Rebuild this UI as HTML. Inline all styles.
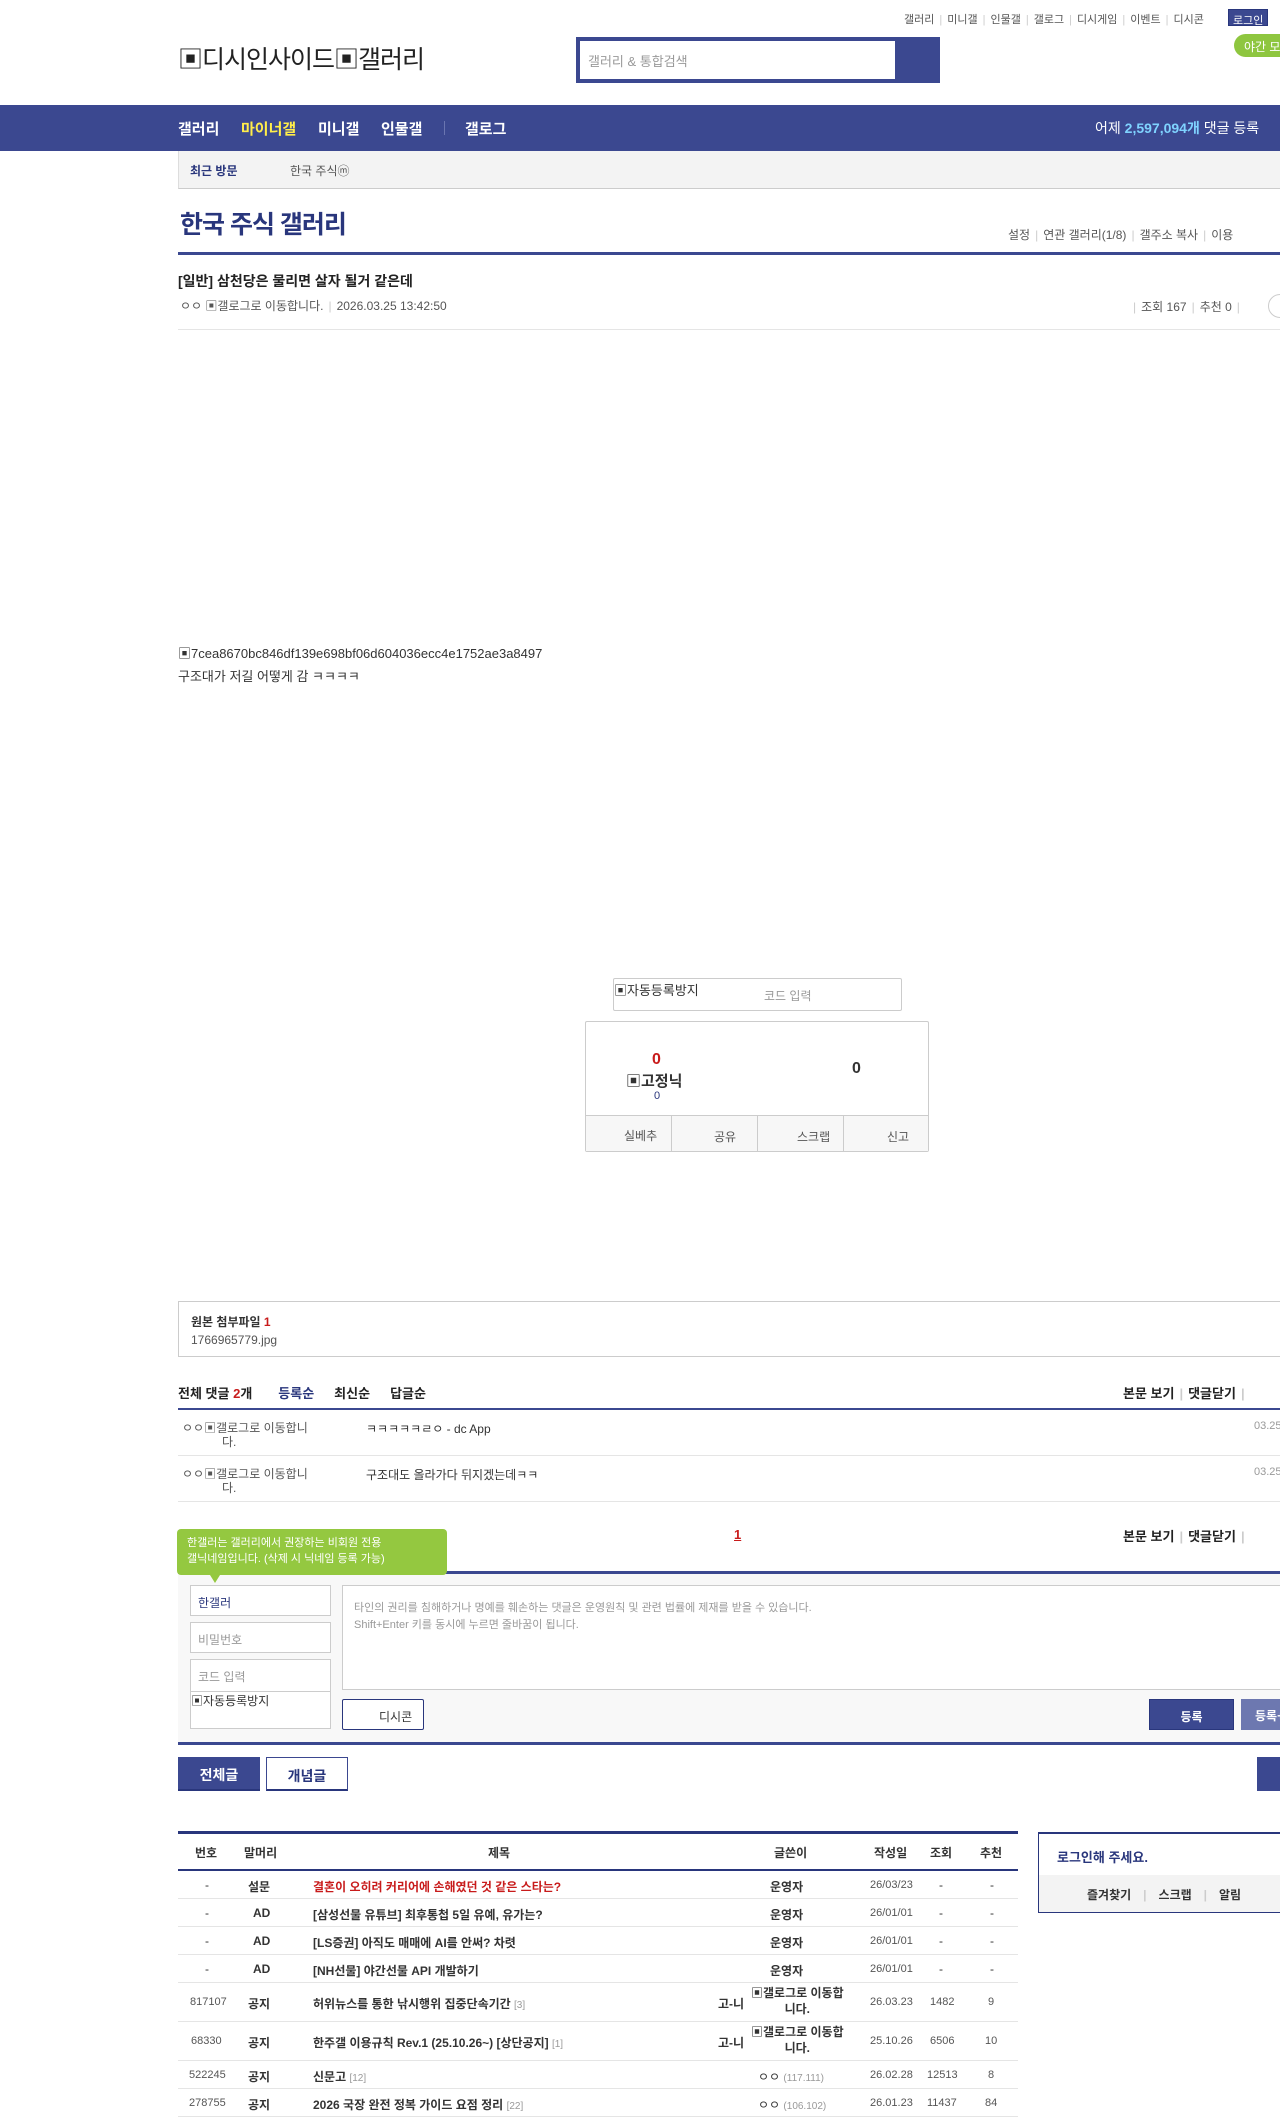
<!DOCTYPE html>
<html><head><meta charset="utf-8"><style>
*{margin:0;padding:0;box-sizing:border-box}
body{width:1280px;height:2119px;position:relative;overflow:hidden;background:#fff;font-family:"Liberation Sans","Noto Sans CJK KR",sans-serif;font-size:12px;color:#333}
.a{position:absolute;white-space:nowrap}
.nv{color:#29367c}
.b{font-weight:bold}
.sep{color:#ccc;margin:0 5px}
.line{position:absolute;height:1px;background:#e5e5e5}
.row{position:absolute;left:178px;width:840px;height:28px;border-bottom:1px solid #e5e5e5;font-size:12px}
.row span{position:absolute;top:7px}
.row span.s{font-size:11px;color:#555;top:8px}
</style></head><body>
<div class="a" style="left:904px;top:11px;font-size:11px;color:#555">갤러리<span class="sep">|</span>미니갤<span class="sep">|</span>인물갤<span class="sep">|</span>갤로그<span class="sep">|</span>디시게임<span class="sep">|</span>이벤트<span class="sep">|</span>디시콘</div>
<div class="a" style="left:1228px;top:9px;width:40px;height:17px;background:#3b4890;color:#fff;font-size:11px;padding:2px 4px;border:1px solid #29367c">로그인</div>
<div class="a" style="left:1234px;top:34px;width:60px;height:23px;background:#8ec63f;border-radius:12px;color:#fff;font-size:12px;padding:4px 10px">야간 모드</div>
<div class="a" style="left:178px;top:40px;font-size:25px;color:#222;letter-spacing:-1px">▣디시인사이드▣갤러리</div>
<div class="a" style="left:576px;top:37px;width:364px;height:46px;background:#3b4890"></div>
<div class="a" style="left:580px;top:41px;width:315px;height:38px;background:#fff;color:#999;font-size:13px;padding:10px 8px">갤러리 &amp; 통합검색</div>
<div class="a" style="left:0;top:105px;width:1280px;height:46px;background:#3b4890"></div>
<div class="a b" style="left:178px;top:118px;font-size:15px;color:#fff">갤러리</div>
<div class="a b" style="left:241px;top:118px;font-size:15px;color:#ffed4a">마이너갤</div>
<div class="a b" style="left:318px;top:118px;font-size:15px;color:#fff">미니갤</div>
<div class="a b" style="left:381px;top:118px;font-size:15px;color:#fff">인물갤</div>
<div class="a" style="left:444px;top:121px;width:1px;height:14px;background:#6a75b0"></div>
<div class="a b" style="left:465px;top:118px;font-size:15px;color:#fff">갤로그</div>
<div class="a" style="left:1095px;top:118px;font-size:14px;color:#fff">어제 <b style="color:#7fd3ff">2,597,094개</b> 댓글 등록</div>
<div class="a" style="left:178px;top:151px;width:1102px;height:38px;background:#f3f3f3;border-bottom:1px solid #ccc;border-left:1px solid #ddd"></div>
<div class="a b nv" style="left:190px;top:162px;font-size:12px">최근 방문</div>
<div class="a" style="left:290px;top:162px;font-size:12px;color:#555">한국 주식ⓜ</div>
<div class="a nv" style="left:180px;top:205px;font-size:25px;font-weight:bold;letter-spacing:-1px">한국 주식 갤러리</div>
<div class="a" style="left:1008px;top:226px;font-size:12px;color:#555">설정<span class="sep">|</span>연관 갤러리(1/8)<span class="sep">|</span>갤주소 복사<span class="sep">|</span>이용</div>
<div class="a" style="left:178px;top:252px;width:1102px;height:3px;background:#3b4890"></div>
<div class="a b" style="left:178px;top:271px;font-size:14px;color:#222">[일반] 삼천당은 물리면 살자 될거 같은데</div>
<div class="a" style="left:180px;top:297px;font-size:12px;color:#555">ㅇㅇ ▣갤로그로 이동합니다.<span class="sep">|</span>2026.03.25 13:42:50</div>
<div class="a" style="left:1128px;top:298px;font-size:12px;color:#555"><span class="sep">|</span>조회 167<span class="sep">|</span>추천 0<span class="sep">|</span></div>
<div class="a" style="left:1268px;top:294px;width:30px;height:24px;border:1px solid #ccc;border-radius:12px"></div>
<div class="line" style="left:178px;top:329px;width:1102px"></div>
<div class="a" style="left:178px;top:643px;font-size:13px;color:#333">▣7cea8670bc846df139e698bf06d604036ecc4e1752ae3a8497</div>
<div class="a" style="left:178px;top:666px;font-size:13px;color:#333">구조대가 저길 어떻게 감 ㅋㅋㅋㅋ</div>
<div class="a" style="left:613px;top:978px;width:289px;height:33px;border:1px solid #ccc;border-radius:2px"></div>
<div class="a" style="left:614px;top:980px;font-size:13px">▣자동등록방지</div>
<div class="a" style="left:764px;top:987px;font-size:12px;color:#999">코드 입력</div>
<div class="a" style="left:585px;top:1021px;width:344px;height:131px;border:1px solid #ccc;border-radius:2px"></div>
<div class="a b" style="left:652px;top:1051px;font-size:16px;color:#c81b1b">0</div>
<div class="a b" style="left:626px;top:1070px;font-size:15px;color:#333">▣고정닉</div>
<div class="a" style="left:654px;top:1090px;font-size:11px;color:#29367c">0</div>
<div class="a b" style="left:852px;top:1060px;font-size:16px;color:#333">0</div>
<div class="a" style="left:586px;top:1115px;width:342px;height:36px;background:#f7f7f7;border-top:1px solid #ccc"></div>
<div class="a" style="left:671px;top:1116px;width:1px;height:36px;background:#ccc"></div>
<div class="a" style="left:757px;top:1116px;width:1px;height:36px;background:#ccc"></div>
<div class="a" style="left:843px;top:1116px;width:1px;height:36px;background:#ccc"></div>
<div class="a" style="left:624px;top:1127px;color:#555">실베추</div>
<div class="a" style="left:714px;top:1128px;color:#555">공유</div>
<div class="a" style="left:797px;top:1128px;color:#555">스크랩</div>
<div class="a" style="left:887px;top:1128px;color:#555">신고</div>
<div class="a" style="left:178px;top:1301px;width:1110px;height:56px;border:1px solid #ccc"></div>
<div class="a b" style="left:191px;top:1313px;font-size:12px">원본 첨부파일 <span style="color:#c81b1b">1</span></div>
<div class="a" style="left:191px;top:1333px;font-size:12px;color:#555">1766965779.jpg</div>
<div class="a b" style="left:178px;top:1383px;font-size:13px;color:#222">전체 댓글 <span style="color:#c81b1b">2</span>개<span class="nv" style="margin-left:26px">등록순</span><span style="margin-left:20px">최신순</span><span style="margin-left:20px">답글순</span></div>
<div class="a b" style="left:1123px;top:1383px;font-size:13px;color:#222">본문 보기<span class="sep">|</span>댓글닫기<span class="sep">|</span></div>
<div class="a" style="left:178px;top:1408px;width:1102px;height:2px;background:#3b4890"></div>
<div class="a" style="left:182px;top:1421px;font-size:12px;color:#555;line-height:14px">ㅇㅇ▣갤로그로 이동합니<br><span style="margin-left:40px">다.</span></div>
<div class="a" style="left:366px;top:1420px;font-size:12px">ㅋㅋㅋㅋㅋㄹㅇ - dc App</div>
<div class="a" style="left:1254px;top:1420px;font-size:11px;color:#999">03.25</div>
<div class="line" style="left:178px;top:1455px;width:1102px"></div>
<div class="a" style="left:182px;top:1467px;font-size:12px;color:#555;line-height:14px">ㅇㅇ▣갤로그로 이동합니<br><span style="margin-left:40px">다.</span></div>
<div class="a" style="left:366px;top:1466px;font-size:12px">구조대도 올라가다 뒤지겠는데ㅋㅋ</div>
<div class="a" style="left:1254px;top:1466px;font-size:11px;color:#999">03.25</div>
<div class="line" style="left:178px;top:1501px;width:1102px"></div>
<div class="a b" style="left:734px;top:1527px;font-size:13px;color:#c81b1b;text-decoration:underline">1</div>
<div class="a b" style="left:1123px;top:1526px;font-size:13px;color:#222">본문 보기<span class="sep">|</span>댓글닫기<span class="sep">|</span></div>
<div class="a" style="left:178px;top:1571px;width:1102px;height:3px;background:#3b4890"></div>
<div class="a" style="left:178px;top:1574px;width:1102px;height:169px;background:#f8f8f8"></div>
<div class="a" style="left:177px;top:1529px;width:270px;height:46px;background:#94c840;border-radius:4px;color:#fff;font-size:11px;line-height:16px;padding:6px 10px">한갤러는 갤러리에서 권장하는 비회원 전용<br>갤닉네임입니다. (삭제 시 닉네임 등록 가능)</div>
<div class="a" style="left:210px;top:1575px;width:0;height:0;border-left:5px solid transparent;border-right:5px solid transparent;border-top:8px solid #94c840"></div>
<div class="a" style="left:190px;top:1585px;width:141px;height:31px;background:#fff;border:1px solid #ccc;color:#29367c;padding:8px 7px">한갤러</div>
<div class="a" style="left:190px;top:1622px;width:141px;height:31px;background:#fff;border:1px solid #ccc;color:#999;padding:8px 7px">비밀번호</div>
<div class="a" style="left:190px;top:1659px;width:141px;height:70px;background:#fff;border:1px solid #ccc;color:#999;padding:8px 7px">코드 입력</div>
<div class="a" style="left:190px;top:1691px;width:141px;height:1px;background:#ccc"></div>
<div class="a" style="left:191px;top:1692px;font-size:12px">▣자동등록방지</div>
<div class="a" style="left:342px;top:1585px;width:950px;height:105px;background:#fff;border:1px solid #ccc;color:#999;font-size:11px;line-height:17px;padding:14px 11px">타인의 권리를 침해하거나 명예를 훼손하는 댓글은 운영원칙 및 관련 법률에 제재를 받을 수 있습니다.<br>Shift+Enter 키를 동시에 누르면 줄바꿈이 됩니다.</div>
<div class="a" style="left:342px;top:1699px;width:82px;height:31px;background:#fff;border:1px solid #29367c;border-radius:2px;color:#333;padding:8px 0 0 36px">디시콘</div>
<div class="a b" style="left:1149px;top:1699px;width:85px;height:31px;background:#3b4890;border:1px solid #29367c;color:#fff;text-align:center;padding-top:8px">등록</div>
<div class="a b" style="left:1241px;top:1699px;width:85px;height:31px;background:#6d78b0;color:#fff;padding:8px 0 0 14px">등록+추천</div>
<div class="a" style="left:178px;top:1742px;width:1102px;height:3px;background:#3b4890"></div>
<div class="a b" style="left:178px;top:1757px;width:82px;height:34px;background:#3b4890;border-bottom:2px solid #29367c;color:#fff;font-size:14px;text-align:center;padding-top:8px">전체글</div>
<div class="a b" style="left:266px;top:1757px;width:82px;height:34px;background:#fff;border:1px solid #3b4890;border-bottom:2px solid #29367c;color:#29367c;font-size:14px;text-align:center;padding-top:8px">개념글</div>
<div class="a" style="left:1257px;top:1757px;width:40px;height:34px;background:#3b4890"></div>
<div class="a" style="left:178px;top:1831px;width:840px;height:3px;background:#29367c"></div>
<div class="a b" style="left:178px;top:1844px;width:840px;font-size:12px;color:#333">
<span class="a" style="left:17px">번호</span><span class="a" style="left:66px">말머리</span><span class="a" style="left:310px">제목</span><span class="a" style="left:596px">글쓴이</span><span class="a" style="left:696px">작성일</span><span class="a" style="left:752px">조회</span><span class="a" style="left:802px">추천</span></div>
<div class="a" style="left:178px;top:1869px;width:840px;height:2px;background:#29367c"></div>
<div class="row" style="top:1871px"><span style="left:27px">-</span><span style="left:70px" class="b">설문</span><span style="left:135px;color:#c81b1b" class="b">결혼이 오히려 커리어에 손해였던 것 같은 스타는?</span><span style="left:592px" class="b">운영자</span><span class="s" style="left:692px">26/03/23</span><span style="left:761px">-</span><span style="left:812px">-</span></div>
<div class="row" style="top:1899px"><span style="left:27px">-</span><span style="left:75px" class="b">AD</span><span style="left:135px" class="b">[삼성선물 유튜브] 최후통첩 5일 유예, 유가는?</span><span style="left:592px" class="b">운영자</span><span class="s" style="left:692px">26/01/01</span><span style="left:761px">-</span><span style="left:812px">-</span></div>
<div class="row" style="top:1927px"><span style="left:27px">-</span><span style="left:75px" class="b">AD</span><span style="left:135px" class="b">[LS증권] 아직도 매매에 AI를 안써? 차렷</span><span style="left:592px" class="b">운영자</span><span class="s" style="left:692px">26/01/01</span><span style="left:761px">-</span><span style="left:812px">-</span></div>
<div class="row" style="top:1955px"><span style="left:27px">-</span><span style="left:75px" class="b">AD</span><span style="left:135px" class="b">[NH선물] 야간선물 API 개발하기</span><span style="left:592px" class="b">운영자</span><span class="s" style="left:692px">26/01/01</span><span style="left:761px">-</span><span style="left:812px">-</span></div>
<div class="row" style="top:1983px;height:39px"><span class="s" style="left:12px;top:13px">817107</span><span style="left:70px;top:12px" class="b">공지</span><span style="left:135px;top:12px" class="b">허위뉴스를 통한 낚시행위 집중단속기간 <small style="color:#999;font-weight:normal">[3]</small></span><span style="left:540px;top:12px" class="b">고-니</span><span style="left:573px;top:2px;line-height:16px;text-align:center" class="b">▣갤로그로 이동합<br>니다.</span><span class="s" style="left:692px;top:13px">26.03.23</span><span class="s" style="left:752px;top:13px">1482</span><span class="s" style="left:810px;top:13px">9</span></div>
<div class="row" style="top:2022px;height:39px"><span class="s" style="left:13px;top:13px">68330</span><span style="left:70px;top:12px" class="b">공지</span><span style="left:135px;top:12px" class="b">한주갤 이용규칙 Rev.1 (25.10.26~) [상단공지] <small style="color:#999;font-weight:normal">[1]</small></span><span style="left:540px;top:12px" class="b">고-니</span><span style="left:573px;top:2px;line-height:16px;text-align:center" class="b">▣갤로그로 이동합<br>니다.</span><span class="s" style="left:692px;top:13px">25.10.26</span><span class="s" style="left:752px;top:13px">6506</span><span class="s" style="left:807px;top:13px">10</span></div>
<div class="row" style="top:2061px"><span class="s" style="left:11px">522245</span><span style="left:70px" class="b">공지</span><span style="left:135px" class="b">신문고 <small style="color:#999;font-weight:normal">[12]</small></span><span style="left:580px">ㅇㅇ <small style="color:#999;font-size:10px">(117.111)</small></span><span class="s" style="left:692px">26.02.28</span><span class="s" style="left:749px">12513</span><span class="s" style="left:810px">8</span></div>
<div class="row" style="top:2089px"><span class="s" style="left:11px">278755</span><span style="left:70px" class="b">공지</span><span style="left:135px" class="b">2026 국장 완전 정복 가이드 요점 정리 <small style="color:#999;font-weight:normal">[22]</small></span><span style="left:580px">ㅇㅇ <small style="color:#999;font-size:10px">(106.102)</small></span><span class="s" style="left:692px">26.01.23</span><span class="s" style="left:749px">11437</span><span class="s" style="left:807px">84</span></div>
<div class="a" style="left:1038px;top:1832px;width:260px;height:81px;border:1px solid #29367c;border-top-width:2px"></div>
<div class="a" style="left:1039px;top:1875px;width:258px;height:37px;background:#f3f3f3"></div>
<div class="a b nv" style="left:1057px;top:1847px;font-size:13px">로그인해 주세요.</div>
<div class="a b" style="left:1087px;top:1886px;font-size:12px;color:#333">즐겨찾기<span class="sep" style="margin:0 12px">|</span>스크랩<span class="sep" style="margin:0 12px">|</span>알림</div>
</body></html>
